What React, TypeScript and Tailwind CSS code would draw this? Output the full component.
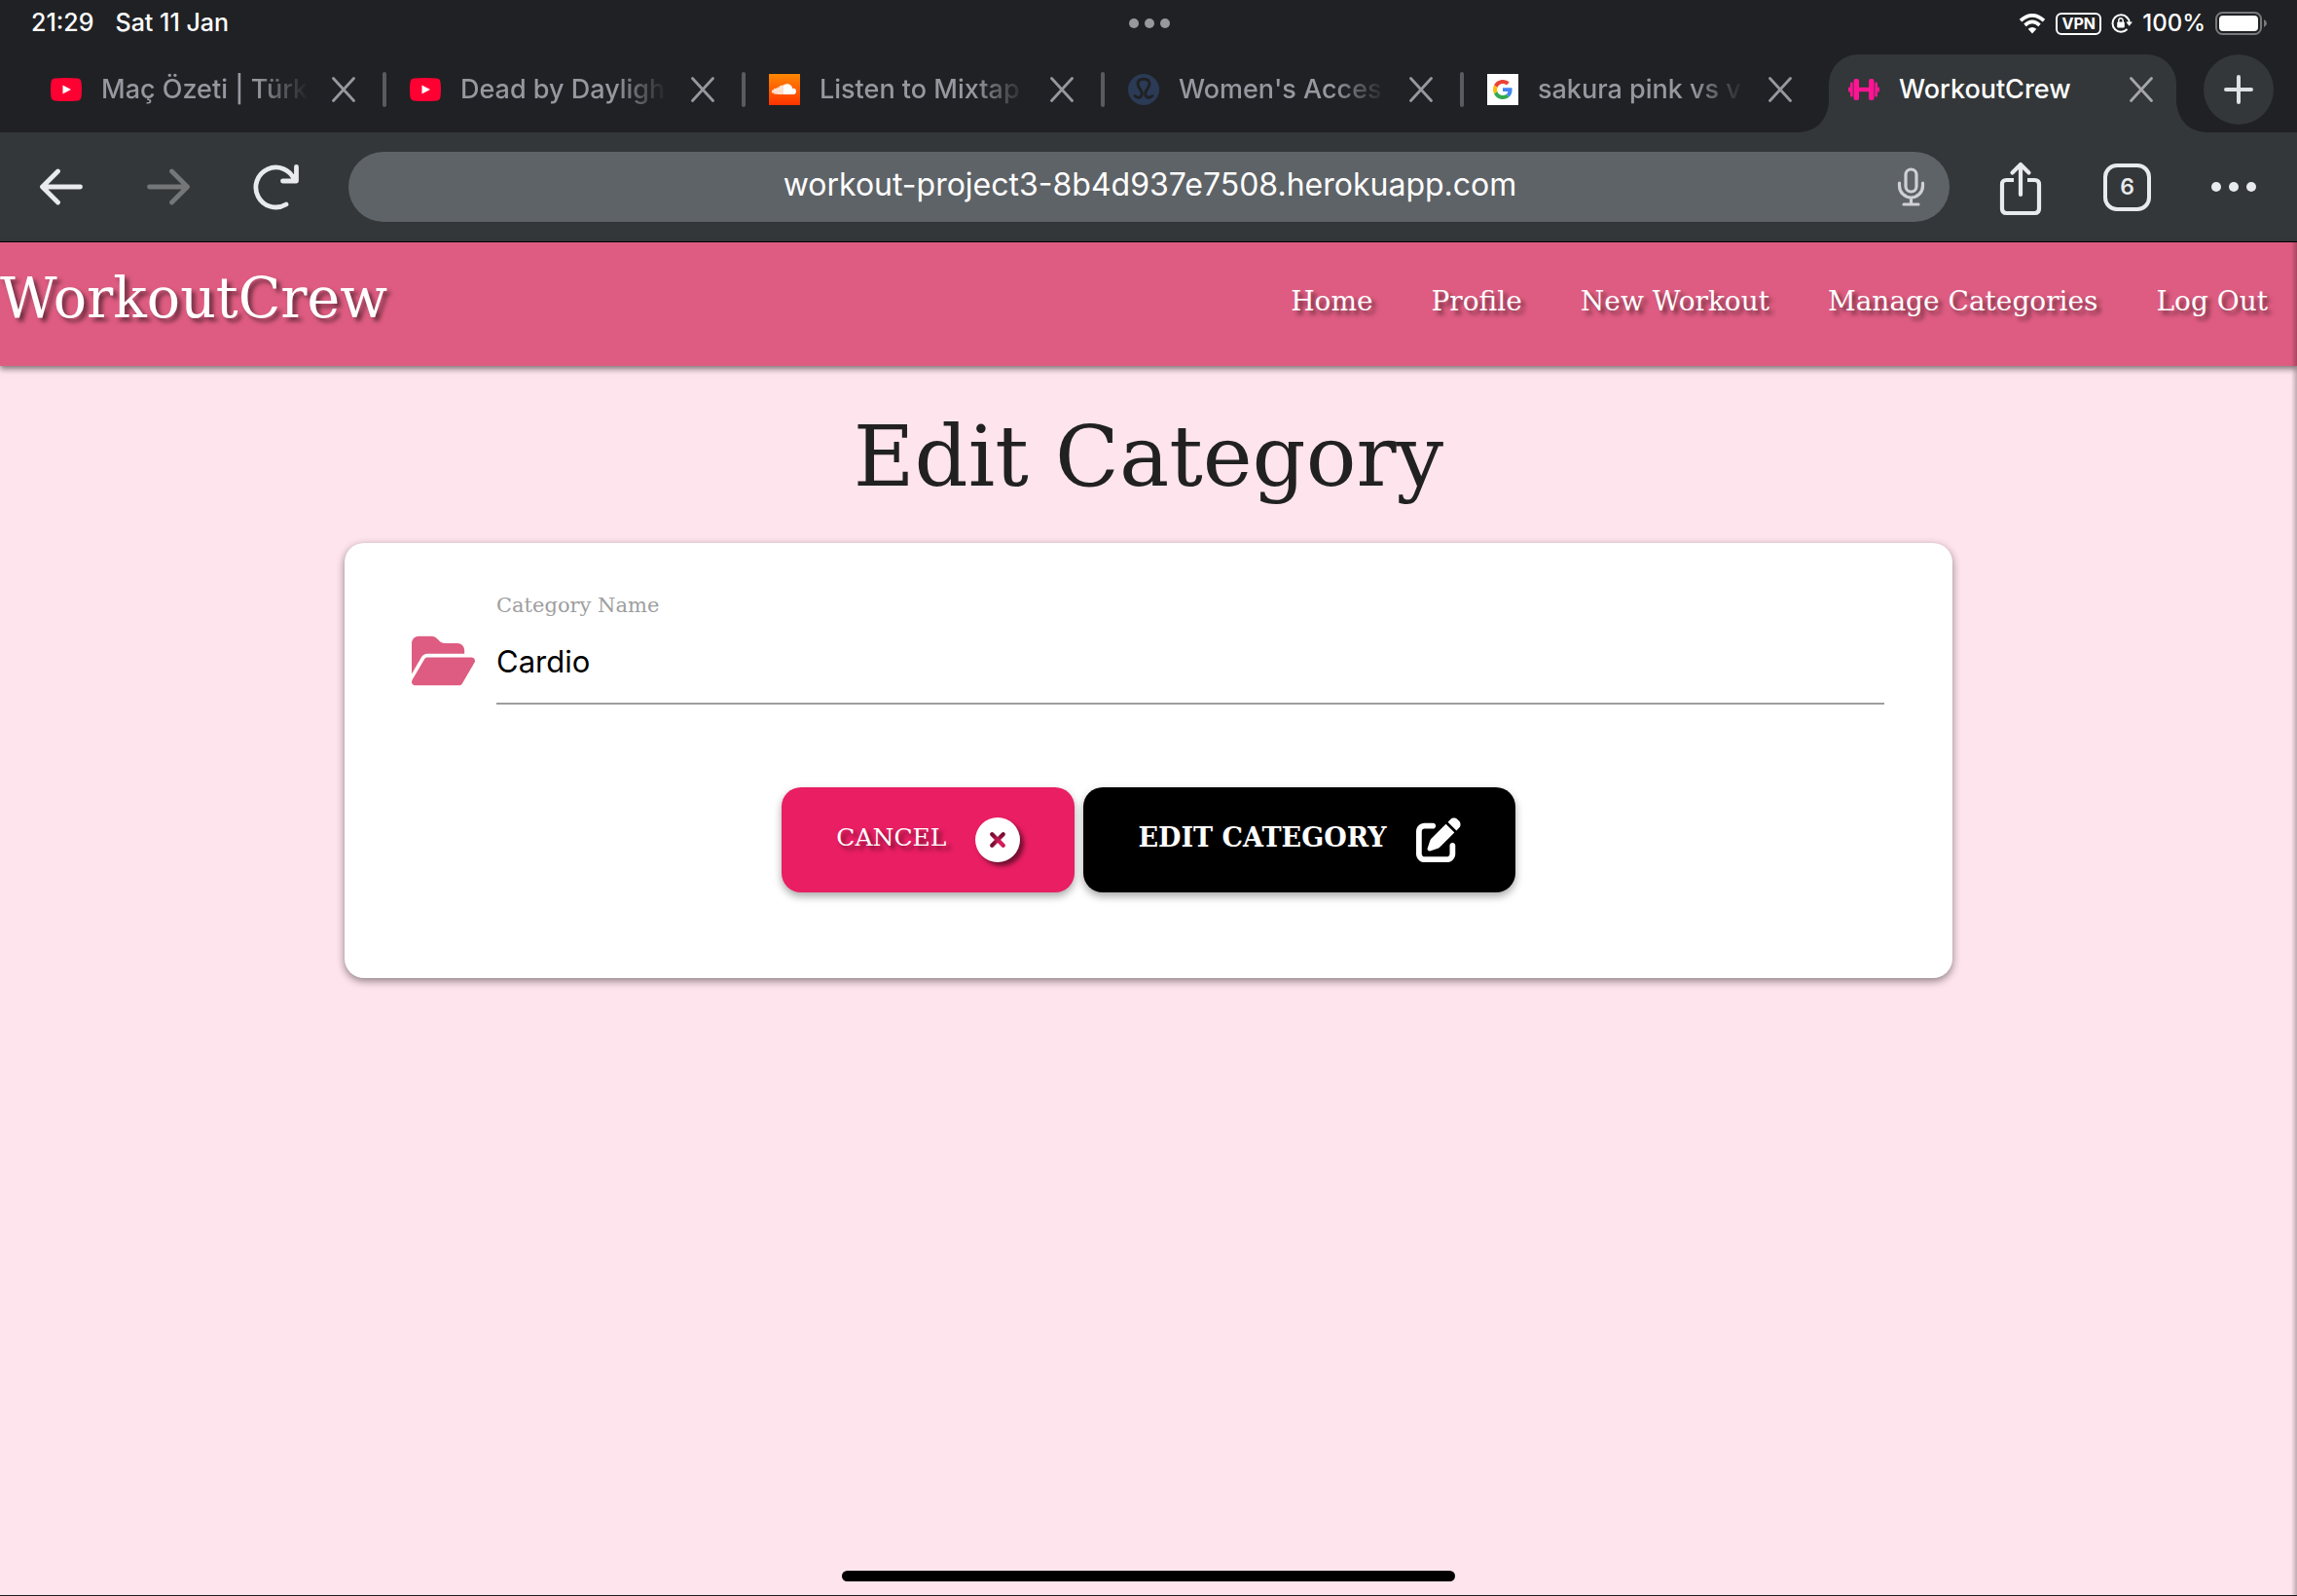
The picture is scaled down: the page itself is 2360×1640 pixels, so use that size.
import React from 'react';
import { FaFolderOpen, FaCircleXmark, FaPenToSquare } from 'react-icons/fa6';

function YouTubeIcon() {
  return (
    <svg viewBox="0 0 32 24" className="h-6 w-8" aria-hidden="true">
      <path d="M4 .6Q16-.6 28 .6 31.300 1 31.600 5 32.400 12 31.600 19 31.300 23 28 23.400 16 24.600 4 23.400.7 23 .4 19-.4 12 .4 5 .7 1 4 .6Z" fill="#ff0033" />
      <path d="M12.500 7.500 21 12l-8.500 4.500Z" fill="#fff" />
    </svg>
  );
}

function SoundCloudIcon() {
  return (
    <svg viewBox="0 0 32 32" className="h-8 w-8" aria-hidden="true">
      <defs>
        <linearGradient id="sc" x1="0" y1="0" x2="0" y2="1">
          <stop offset="0" stopColor="#ff8800" />
          <stop offset="1" stopColor="#ff3300" />
        </linearGradient>
      </defs>
      <path d="M0 0h32v32H0z" fill="url(#sc)" />
      <path d="M15 21V11.500q2-1.600 4.500-1.300 4 .6 4.700 4.700 3.600-.7 3.800 3-.2 3.100-3.200 3.100Z" fill="#fff" />
      <path d="M14 11.500v9.500M12 12v9M10 13.500V21M8 14.500v6.300M6 15v5.500M4 16.500v3" stroke="#fff" strokeWidth="1.800" strokeOpacity=".9" />
    </svg>
  );
}

function LululemonIcon() {
  return (
    <svg viewBox="0 0 32 32" className="h-8 w-8" aria-hidden="true">
      <circle cx="16" cy="16" r="16" fill="#2b3b56" />
      <path d="M7 22.500c3 3 7.300 1.800 7.300-2.500 0-4-4.300-5.500-4.300-9.800C10 7 12.500 5.300 16 5.300s6 1.700 6 4.900c0 4.300-4.300 5.800-4.300 9.800 0 4.300 4.300 5.500 7.300 2.500" fill="none" stroke="#202124" strokeWidth="3" strokeLinecap="round" />
    </svg>
  );
}

function GoogleIcon() {
  return (
    <svg viewBox="0 0 32 32" className="h-8 w-8" aria-hidden="true">
      <path d="M0 0h32v32H0z" fill="#fff" />
      <g transform="translate(6 6) scale(.4167)">
        <path fill="#EA4335" d="M24 9.500c3.540 0 6.710 1.220 9.210 3.600l6.850-6.850C35.900 2.380 30.470 0 24 0 14.620 0 6.510 5.380 2.560 13.220l7.980 6.190C12.430 13.720 17.740 9.500 24 9.500z" />
        <path fill="#4285F4" d="M46.980 24.550c0-1.570-.15-3.090-.38-4.550H24v9.020h12.940c-.58 2.960-2.260 5.480-4.780 7.180l7.730 6c4.510-4.180 7.090-10.360 7.090-17.650z" />
        <path fill="#FBBC05" d="M10.530 28.590c-.48-1.450-.76-2.990-.76-4.590s.27-3.140.76-4.590l-7.980-6.190C.92 16.460 0 20.120 0 24c0 3.880.92 7.540 2.560 10.780l7.970-6.190z" />
        <path fill="#34A853" d="M24 48c6.480 0 11.930-2.130 15.890-5.810l-7.730-6c-2.150 1.450-4.920 2.300-8.160 2.300-6.260 0-11.570-4.220-13.470-9.910l-7.980 6.190C6.510 42.620 14.620 48 24 48z" />
      </g>
    </svg>
  );
}

function DumbbellIcon() {
  return (
    <svg viewBox="0 0 32 32" className="h-8 w-8" aria-hidden="true" fill="#ff1493">
      <rect x="5.500" y="5" width="5.500" height="22" rx="2" />
      <rect x="21" y="5" width="5.500" height="22" rx="2" />
      <rect x="2" y="8.500" width="2.700" height="15" rx="1.200" />
      <rect x="27.300" y="8.500" width="2.700" height="15" rx="1.200" />
      <rect x="0" y="13.500" width="2.500" height="5" rx="1" />
      <rect x="29.500" y="13.500" width="2.500" height="5" rx="1" />
      <rect x="10" y="13.800" width="12" height="4.400" />
    </svg>
  );
}

function CloseIcon() {
  return (
    <svg viewBox="0 0 24 26" className="h-[26px] w-6" aria-hidden="true">
      <path d="M1.500 1.500 22.500 24.500M22.500 1.500 1.500 24.500" stroke="currentColor" strokeWidth="2.800" strokeLinecap="round" />
    </svg>
  );
}

const tabs = [
  { title: 'Maç Özeti | Türk', icon: <YouTubeIcon /> },
  { title: 'Dead by Dayligh', icon: <YouTubeIcon /> },
  { title: 'Listen to Mixtap', icon: <SoundCloudIcon /> },
  { title: "Women's Acces", icon: <LululemonIcon /> },
  { title: 'sakura pink vs v', icon: <GoogleIcon /> },
];

function StatusBar() {
  return (
    <div className="grid h-12 grid-cols-[1fr_auto_1fr] items-center pr-[30px] pl-8 font-medium text-white">
      <div className="flex gap-[22px] text-[25px]">
        <span>21:29</span>
        <span>Sat 11 Jan</span>
      </div>
      <div className="flex gap-1.5">
        <span className="size-2.5 rounded-full bg-[#98989d]" />
        <span className="size-2.5 rounded-full bg-[#98989d]" />
        <span className="size-2.5 rounded-full bg-[#98989d]" />
      </div>
      <div className="flex items-center justify-end gap-[10px] text-2xl">
        <svg viewBox="0 0 28 21" className="h-[21px] w-7" aria-hidden="true">
          <path d="M2 7.200Q14-3.600 26 7.200M6.500 11.800Q14 5 21.500 11.800" fill="none" stroke="#fff" strokeWidth="3.600" />
          <path d="M9.700 15.800Q14 12 18.300 15.800L14 20.500Z" fill="#fff" />
        </svg>
        <span className="flex h-[23px] w-[47px] items-center justify-center rounded-md border-2 border-white text-base leading-none font-bold">VPN</span>
        <svg viewBox="0 0 22 20" className="h-5 w-[22px]" aria-hidden="true">
          <path d="M16.500 4A8.700 8.700 0 1 0 16.500 16" fill="none" stroke="#fff" strokeWidth="2" />
          <path d="M16 3.500Q18.700 6 18.700 9" fill="none" stroke="#fff" strokeWidth="2" />
          <path d="M15.300 8.500h6.700l-3.400 4.300Z" fill="#fff" />
          <rect x="6.200" y="8.600" width="7.600" height="6" rx="1" fill="#fff" />
          <path d="M7.800 9V7a2.200 2.200 0 0 1 4.400 0v2" fill="none" stroke="#fff" strokeWidth="1.400" />
        </svg>
        <span>100%</span>
        <svg viewBox="0 0 54 24" className="h-6 w-[54px]" aria-hidden="true">
          <rect x="1" y="1" width="46" height="22" rx="6.500" fill="none" stroke="#79797c" strokeWidth="2" />
          <rect x="4" y="4" width="40" height="16" rx="4" fill="#fff" />
          <path d="M50 8q3 1.500 3 4t-3 4Z" fill="#79797c" />
        </svg>
      </div>
    </div>
  );
}

function TabStrip() {
  return (
    <div className="mt-2 flex h-20 items-stretch pl-7 text-[27px] font-medium">
      {tabs.map((tab, i) => (
        <div key={i} className="flex min-w-0 flex-1 items-center pb-2">
          <div className="flex min-w-0 flex-1 items-center pl-6">
            <span className="shrink-0">{tab.icon}</span>
            <span className="ml-5 min-w-0 flex-1 overflow-hidden mask-r-from-75% mask-r-to-100% whitespace-nowrap text-[#97979f]">{tab.title}</span>
            <button type="button" aria-label="Close tab" className="mr-7 ml-6 shrink-0 text-[#97979f]">
              <CloseIcon />
            </button>
          </div>
          <span className={i < 4 ? 'h-9 w-1 rounded-full bg-[#5a5b60]' : 'h-9 w-1'} />
        </div>
      ))}
      <div className="relative ml-1.5 flex w-[357px] shrink-0 items-center rounded-t-[30px] bg-[#333739] pr-6 pb-2 pl-5">
        <svg viewBox="0 0 30 30" className="absolute bottom-0 -left-[30px] size-[30px]" aria-hidden="true">
          <path d="M30 0V30H0Q26 28 30 0Z" fill="#333739" />
        </svg>
        <svg viewBox="0 0 30 30" className="absolute -right-[30px] bottom-0 size-[30px]" aria-hidden="true">
          <path d="M0 0V30H30Q4 28 0 0Z" fill="#333739" />
        </svg>
        <DumbbellIcon />
        <span className="ml-5 flex-1 text-white">WorkoutCrew</span>
        <button type="button" aria-label="Close tab" className="text-[#a5a5aa]">
          <CloseIcon />
        </button>
      </div>
      <button type="button" aria-label="New tab" className="mr-6 ml-7 flex size-[72px] items-center justify-center rounded-full bg-[#333739]">
        <svg viewBox="0 0 30 30" className="size-[30px]" aria-hidden="true">
          <path d="M15 2v26M2 15h26" stroke="#dfe1e5" strokeWidth="4" strokeLinecap="round" />
        </svg>
      </button>
    </div>
  );
}

function Toolbar() {
  return (
    <div className="flex h-[113px] items-center border-b border-black bg-[#333739] pr-[42px] pl-10 text-[#e8eaed]">
      <button type="button" aria-label="Back">
        <svg viewBox="0 0 46 38" className="h-[38px] w-[46px]" fill="none" stroke="currentColor" strokeWidth="4.800" strokeLinecap="round" strokeLinejoin="round" aria-hidden="true">
          <path d="M42.500 19H3.500M19.500 3 3.500 19l16 16" />
        </svg>
      </button>
      <button type="button" aria-label="Forward" disabled className="ml-16 text-[#757678]">
        <svg viewBox="0 0 46 38" className="h-[38px] w-[46px]" fill="none" stroke="currentColor" strokeWidth="4.800" strokeLinecap="round" strokeLinejoin="round" aria-hidden="true">
          <path d="M3.500 19H42.500M26.500 3l16 16-16 16" />
        </svg>
      </button>
      <button type="button" aria-label="Reload" className="ml-16">
        <svg viewBox="0 0 48 48" className="size-12" fill="none" stroke="currentColor" strokeWidth="4.800" strokeLinecap="round" strokeLinejoin="round" aria-hidden="true">
          <path d="M34 42A20.500 20.500 0 1 1 42.500 17M44.500 3.500v14.500H30.500" />
        </svg>
      </button>
      <div className="ml-[50px] flex h-[72px] flex-1 items-center rounded-full bg-[#5e6367] px-5">
        <input aria-label="Address" readOnly value="workout-project3-8b4d937e7508.herokuapp.com" className="ml-9 min-w-0 flex-1 bg-transparent pb-1 text-center text-[32px] text-white outline-none" />
        <button type="button" aria-label="Voice search" className="mr-1">
          <svg viewBox="0 0 30 40" className="h-10 w-[30px]" fill="none" stroke="#cfd1d4" strokeWidth="3.200" strokeLinecap="round" aria-hidden="true">
            <rect x="9" y="2" width="11" height="23" rx="5.500" />
            <path d="M2.500 16v3a12 12 0 0 0 24 0v-3M14.500 31v6M7 38h15" />
          </svg>
        </button>
      </div>
      <button type="button" aria-label="Share" className="ml-[51px]">
        <svg viewBox="0 0 44 60" className="h-[60px] w-11" fill="none" stroke="currentColor" strokeWidth="4.200" strokeLinejoin="round" aria-hidden="true">
          <path d="M15 23H7.500Q3 23 3 27.500V52.500Q3 57 7.500 57h29q4.500 0 4.500-4.500V27.500Q41 23 36.500 23H29" />
          <path d="M22 38V7M13.500 15.500 22 7l8.500 8.500" strokeLinecap="round" />
        </svg>
      </button>
      <button type="button" aria-label="Show open tabs" className="ml-[63px] flex size-[49px] items-center justify-center rounded-[14px] border-4 border-[#e8eaed] text-[23px] font-semibold">6</button>
      <button type="button" aria-label="More" className="ml-[62px] flex gap-2">
        <span className="size-2.5 rounded-full bg-[#e8eaed]" />
        <span className="size-2.5 rounded-full bg-[#e8eaed]" />
        <span className="size-2.5 rounded-full bg-[#e8eaed]" />
      </button>
    </div>
  );
}

const links = ['Home', 'Profile', 'New Workout', 'Manage Categories', 'Log Out'];

function SiteNav() {
  return (
    <nav className="flex h-[127px] items-center justify-between bg-[#de5c81] pr-[30px] font-['DejaVu_Serif',serif] text-white shadow-[0_3px_6px_rgba(0,0,0,0.5)]">
      <a href="#home" className="pb-3 text-[57px] text-shadow-[4px_4px_4px_rgba(0,0,0,0.5)]">WorkoutCrew</a>
      <ul className="flex gap-[60px] pb-1.5 text-[28px] text-shadow-[4px_4px_4px_rgba(0,0,0,0.5)]">
        {links.map((l) => (
          <li key={l}>
            <a href="#nav">{l}</a>
          </li>
        ))}
      </ul>
    </nav>
  );
}

export default function App() {
  return (
    <div className="flex min-h-screen flex-col border-b border-[#1c1b1f] bg-[#fee4ec] font-[Inter,sans-serif]">
      <header className="bg-[#202124]">
        <StatusBar />
        <TabStrip />
        <Toolbar />
      </header>
      <div className="relative flex flex-1 flex-col">
        <SiteNav />
        <main className="mx-auto w-[70%] flex-1 font-['DejaVu_Serif',serif]">
          <h1 className="mt-[47px] text-center text-[86px] leading-[92px] text-[#212121]">Edit Category</h1>
          <form className="mt-[43px] rounded-[20px] bg-white px-[70px] pt-[50px] pb-[88px] shadow-[0_3px_8px_rgba(0,0,0,0.45)]" onSubmit={(e) => e.preventDefault()}>
            <div className="flex">
              <FaFolderOpen className="mt-10 mr-[22px] -ml-px h-[62px] w-[65px] text-[#de5c81]" aria-hidden="true" />
              <div className="flex-1">
                <label htmlFor="category" className="block text-[21px] leading-[28px] text-[#9e9e9e]">Category Name</label>
                <input id="category" defaultValue="Cardio" className="block h-[88px] w-full border-b-2 border-[#9e9e9e] font-[Inter,sans-serif] text-[31px] text-black outline-none" />
              </div>
            </div>
            <div className="mt-[85px] flex justify-center gap-[9px]">
              <button type="button" className="flex h-[108px] items-center gap-[30px] rounded-[20px] bg-[#e91e63] px-14 text-[25px] text-white shadow-[0_4px_8px_rgba(0,0,0,0.35)]">
                <span className="pb-1 text-shadow-[4px_4px_4px_rgba(0,0,0,0.5)]">CANCEL</span>
                <FaCircleXmark className="size-[46px] drop-shadow-[4px_4px_2px_rgba(0,0,0,0.5)]" aria-hidden="true" />
              </button>
              <button type="submit" className="flex h-[108px] items-center gap-[30px] rounded-[20px] bg-black px-14 text-[27px] font-bold text-white shadow-[0_4px_8px_rgba(0,0,0,0.35)]">
                <span className="pb-1">EDIT CATEGORY</span>
                <FaPenToSquare className="size-[46px]" aria-hidden="true" />
              </button>
            </div>
          </form>
        </main>
        <div className="mx-auto mb-[14px] h-[11px] w-[630px] rounded-full bg-black" />
        <div className="absolute inset-y-0 right-0 w-1.5 bg-linear-to-l from-black/25 to-transparent" />
      </div>
    </div>
  );
}
